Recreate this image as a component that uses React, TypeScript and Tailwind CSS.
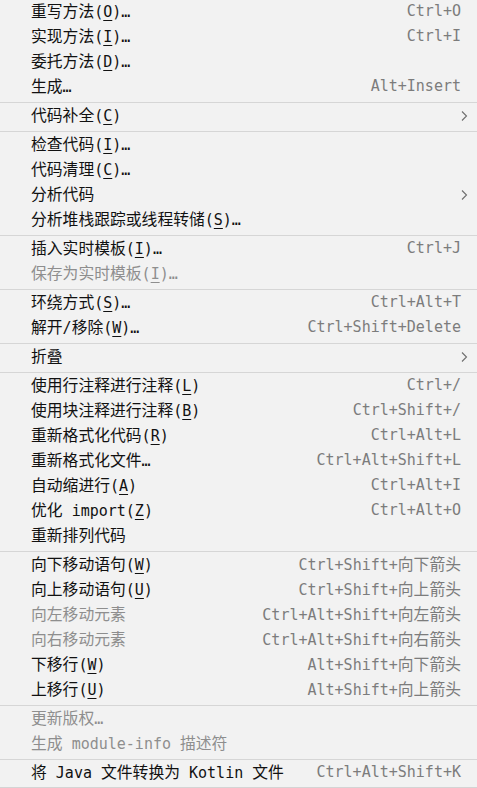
import React from 'react';

type Row =
    | { sep: true }
    | { label: string; shortcut?: string; sub?: boolean; disabled?: boolean };

// "_X" marks the mnemonic letter (underlined)
const rows: Row[] = [
    { label: '重写方法(_O)…', shortcut: 'Ctrl+O' },
    { label: '实现方法(_I)…', shortcut: 'Ctrl+I' },
    { label: '委托方法(_D)…' },
    { label: '生成…', shortcut: 'Alt+Insert' },
    { sep: true },
    { label: '代码补全(_C)', sub: true },
    { sep: true },
    { label: '检查代码(_I)…' },
    { label: '代码清理(_C)…' },
    { label: '分析代码', sub: true },
    { label: '分析堆栈跟踪或线程转储(_S)…' },
    { sep: true },
    { label: '插入实时模板(_I)…', shortcut: 'Ctrl+J' },
    { label: '保存为实时模板(_I)…', disabled: true },
    { sep: true },
    { label: '环绕方式(_S)…', shortcut: 'Ctrl+Alt+T' },
    { label: '解开/移除(_W)…', shortcut: 'Ctrl+Shift+Delete' },
    { sep: true },
    { label: '折叠', sub: true },
    { sep: true },
    { label: '使用行注释进行注释(_L)', shortcut: 'Ctrl+/' },
    { label: '使用块注释进行注释(_B)', shortcut: 'Ctrl+Shift+/' },
    { label: '重新格式化代码(_R)', shortcut: 'Ctrl+Alt+L' },
    { label: '重新格式化文件…', shortcut: 'Ctrl+Alt+Shift+L' },
    { label: '自动缩进行(_A)', shortcut: 'Ctrl+Alt+I' },
    { label: '优化 import(_Z)', shortcut: 'Ctrl+Alt+O' },
    { label: '重新排列代码' },
    { sep: true },
    { label: '向下移动语句(_W)', shortcut: 'Ctrl+Shift+向下箭头' },
    { label: '向上移动语句(_U)', shortcut: 'Ctrl+Shift+向上箭头' },
    { label: '向左移动元素', shortcut: 'Ctrl+Alt+Shift+向左箭头', disabled: true },
    { label: '向右移动元素', shortcut: 'Ctrl+Alt+Shift+向右箭头', disabled: true },
    { label: '下移行(_W)', shortcut: 'Alt+Shift+向下箭头' },
    { label: '上移行(_U)', shortcut: 'Alt+Shift+向上箭头' },
    { sep: true },
    { label: '更新版权…', disabled: true },
    { label: '生成 module-info 描述符', disabled: true },
    { sep: true },
    { label: '将 Java 文件转换为 Kotlin 文件', shortcut: 'Ctrl+Alt+Shift+K' },
];

// CJK runs are a bit wider than the mono font in the original, so size them up
const Mixed: React.FC<{ text: string }> = ({ text }) => {
    const parts = text.match(/[\u4e00-\u9fff]+|[^\u4e00-\u9fff]+/g) || [];
    return (
        <>
            {parts.map((p, i) =>
                /[\u4e00-\u9fff]/.test(p) ? (
                    <span key={i} className="text-[15.8px]">{p}</span>
                ) : (
                    <span key={i}>{p}</span>
                )
            )}
        </>
    );
};

const Label: React.FC<{ text: string }> = ({ text }) => {
    const i = text.indexOf('_');
    if (i < 0) return <Mixed text={text} />;
    return (
        <>
            <Mixed text={text.slice(0, i)} />
            <span className="underline underline-offset-[3px] decoration-1">{text[i + 1]}</span>
            <Mixed text={text.slice(i + 2)} />
        </>
    );
};

const Chevron = () => (
    <svg width="8" height="12" viewBox="0 0 8 12" className="text-[#6e6e6e]">
        <polyline points="2,1.5 6.5,6 2,10.5" fill="none" stroke="currentColor" strokeWidth="1.1" />
    </svg>
);

export default function App() {
    return (
        <div
            className="w-[477px] h-[788px] bg-[#f2f2f2] border-b border-[#d4d4d4] overflow-hidden text-[15px] leading-none whitespace-pre"
            style={{ fontFamily: '"DejaVu Sans Mono", "Noto Sans CJK SC", monospace' }}
        >
            {rows.map((r, idx) =>
                'sep' in r ? (
                    <div key={idx} className="h-[4px] flex items-center">
                        <div className="h-px w-full bg-[#d6d6d6]" />
                    </div>
                ) : (
                    <div key={idx} className="h-[25px] flex items-center pl-[31px] pr-[16px] pb-[2px]">
                        <span className={r.disabled ? 'text-[#8e8e8e]' : 'text-[#111111]'}>
                            <Label text={r.label} />
                        </span>
                        <span className="flex-1" />
                        {r.shortcut && (
                            <span className="text-[#7c7c7c]">
                                <Mixed text={r.shortcut} />
                            </span>
                        )}
                        {r.sub && (
                            <span className="-mr-[7px]">
                                <Chevron />
                            </span>
                        )}
                    </div>
                )
            )}
        </div>
    );
}
